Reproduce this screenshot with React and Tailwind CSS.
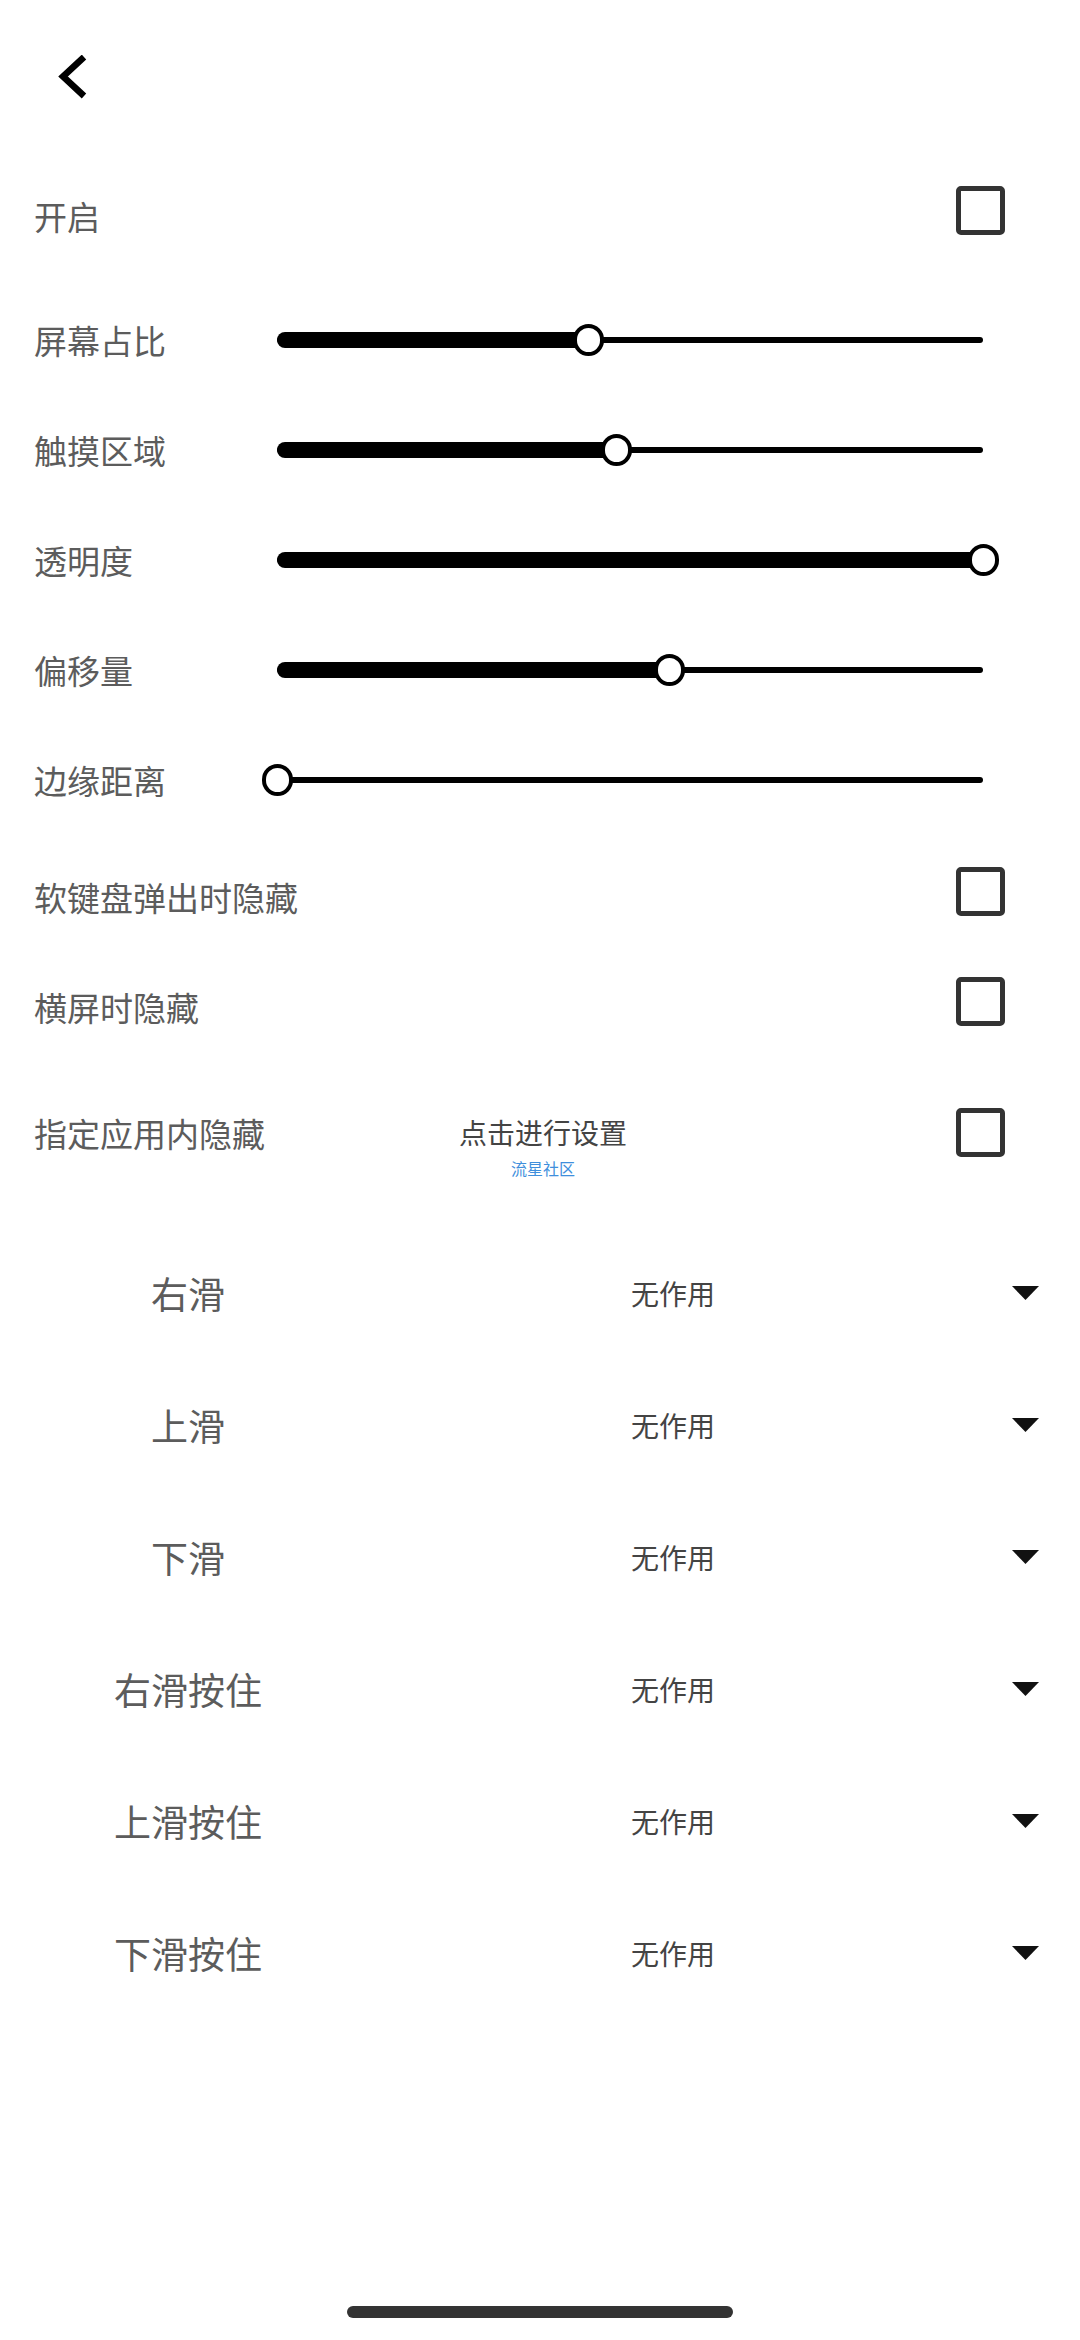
import { useState } from "react";

const font = { fontFamily: '"Noto Sans CJK SC", "Noto Sans", sans-serif' };

const sliders = [
  { label: "屏幕占比", value: 0.44 },
  { label: "触摸区域", value: 0.48 },
  { label: "透明度", value: 1 },
  { label: "偏移量", value: 0.555 },
  { label: "边缘距离", value: 0 },
];

const gestures = ["右滑", "上滑", "下滑", "右滑按住", "上滑按住", "下滑按住"];

function CheckBox({ checked, onClick, className = "" }) {
  return (
    <button
      onClick={onClick}
      className={"w-[49px] h-[49px] border-[5px] border-[#333333] rounded-[5px] bg-white " + className}
    >
      {checked && (
        <svg viewBox="0 0 24 24" className="w-full h-full">
          <path d="M5 12l5 5 9-10" fill="none" stroke="#333" strokeWidth="3" />
        </svg>
      )}
    </button>
  );
}

function Slider({ label, value }) {
  const len = 706;
  return (
    <div className="h-[110px] flex items-center pl-[34px]">
      <div className="w-[243px] text-[33px] text-[#5c5c5c] leading-[40px]">{label}</div>
      <div className="relative w-[706px] h-[32px]">
        <div className="absolute left-0 right-0 top-[13px] h-[6px] bg-black rounded-full" />
        <div
          className="absolute left-0 top-[8px] h-[16px] bg-black rounded-l-full"
          style={{ width: value * len }}
        />
        <div
          className="absolute top-0 w-[31px] h-[32px] rounded-full bg-white border-[4px] border-black"
          style={{ left: value * len - 15 }}
        />
      </div>
    </div>
  );
}

export default function App() {
  const [checks, setChecks] = useState({ on: false, kb: false, land: false, app: false });
  const toggle = (k) => setChecks({ ...checks, [k]: !checks[k] });

  return (
    <div className="w-[1080px] h-[2340px] bg-white flex flex-col overflow-hidden" style={font}>
      {/* header */}
      <div className="h-[148px] pl-[57px] pt-[55px]">
        <svg width="32" height="44" viewBox="0 0 32 44">
          <path d="M27 2 L6 21.5 L27 41" fill="none" stroke="black" strokeWidth="6.5" strokeLinejoin="miter" />
        </svg>
      </div>

      {/* 开启 */}
      <div className="h-[135px] flex items-center justify-between pl-[34px] pr-[75px]">
        <div className="text-[33px] text-[#5c5c5c] leading-[40px]">开启</div>
        <CheckBox checked={checks.on} onClick={() => toggle("on")} className="mb-[10px]" />
      </div>

      <div className="h-[2px]" />

      {sliders.map((s) => (
        <Slider key={s.label} label={s.label} value={s.value} />
      ))}

      <div className="h-[124px] flex items-center justify-between pl-[34px] pr-[75px]">
        <div className="text-[33px] text-[#5c5c5c] leading-[40px]">软键盘弹出时隐藏</div>
        <CheckBox checked={checks.kb} onClick={() => toggle("kb")} className="mb-[12px]" />
      </div>

      <div className="h-[96px] flex items-center justify-between pl-[34px] pr-[75px]">
        <div className="text-[33px] text-[#5c5c5c] leading-[40px]">横屏时隐藏</div>
        <CheckBox checked={checks.land} onClick={() => toggle("land")} className="mb-[12px]" />
      </div>

      <div className="h-[172px] grid grid-cols-[1fr_auto_1fr] items-start">
        <div className="ml-[34px] mt-[58px] text-[33px] text-[#5c5c5c] leading-[40px]">指定应用内隐藏</div>
        <div className="ml-[6px] mt-[60px] flex flex-col items-center">
          <div className="text-[28px] text-[#444444] leading-[34px]">点击进行设置</div>
          <div className="mt-[9px] text-[16px] text-[#3f8fdc] leading-[20px]">流星社区</div>
        </div>
        <div className="flex justify-end mr-[75px]">
          <CheckBox checked={checks.app} onClick={() => toggle("app")} className="mt-[53px]" />
        </div>
      </div>

      {gestures.map((g) => (
        <div key={g} className="h-[132px] flex items-center">
          <div className="w-[376px] text-center text-[37px] text-[#5c5c5c] leading-[44px]">{g}</div>
          <div className="ml-[255px] text-[28px] text-[#444444] leading-[34px]">无作用</div>
          <div className="flex-1" />
          <svg width="27" height="14" viewBox="0 0 27 14" className="mr-[41px]">
            <path d="M0 0 L27 0 L13.5 14 Z" fill="#111111" />
          </svg>
        </div>
      ))}

      <div className="flex-1" />
      <div className="flex justify-center pb-[22px]">
        <div className="w-[386px] h-[12px] rounded-full bg-[#333333]" />
      </div>
    </div>
  );
}
